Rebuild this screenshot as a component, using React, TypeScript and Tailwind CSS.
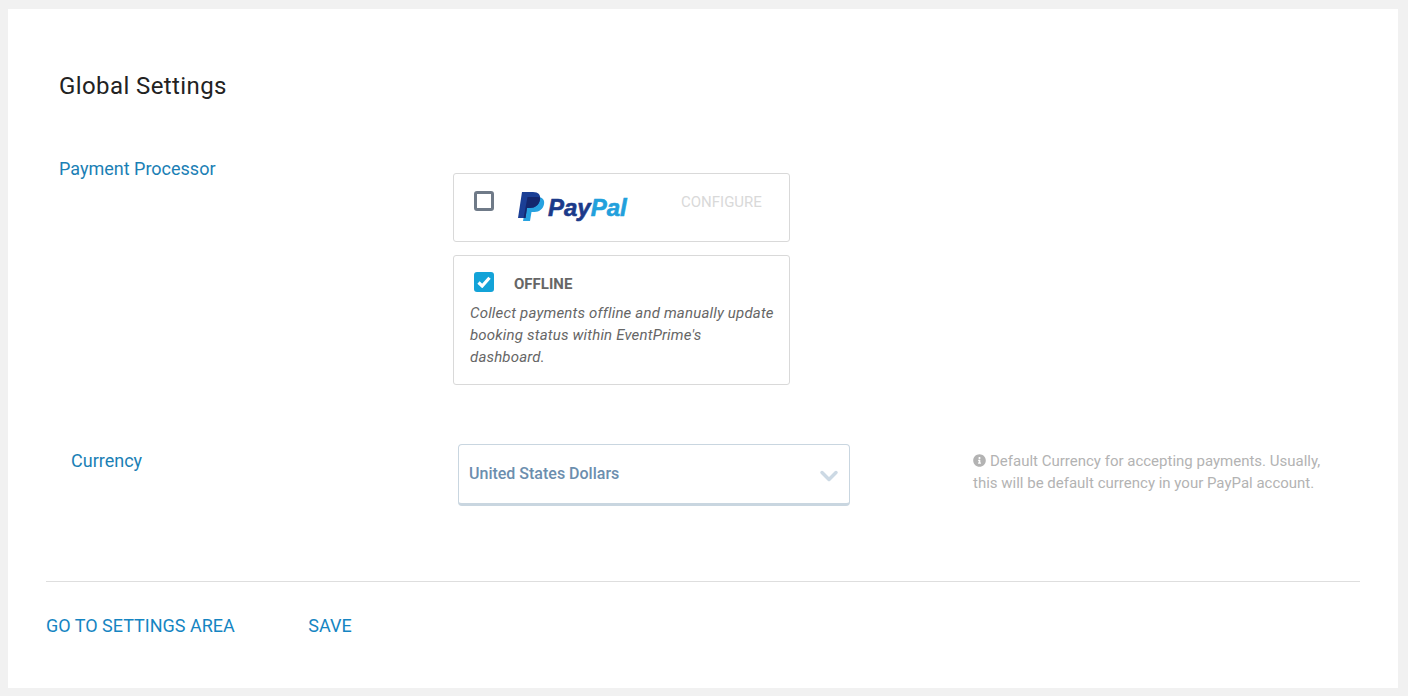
import React from 'react';
import { FaInfoCircle } from 'react-icons/fa';
import { FiChevronDown } from 'react-icons/fi';

const backP = 'M9.500 5H19c5.500 0 8 2.800 7 7.300C25 17 21.500 20 16.500 20h-3L12 29H5z';
const frontP = 'M4 0h11c5.500 0 8 3 7 7.800C21 13 17 16 12 16H9l-1.500 10H0z';

const PayPalLogo: React.FC = () => (
  <div className="flex items-start h-[30px]">
    <svg width="27" height="29" viewBox="0 0 27 29" className="block mt-[1px] shrink-0">
      <defs>
        <clipPath id="front-p">
          <path d={frontP} />
        </clipPath>
      </defs>
      <path d={backP} fill="#27a2e0" />
      <path d={frontP} fill="#1b3f96" />
      <path d={backP} fill="#14276e" clipPath="url(#front-p)" />
    </svg>
    <span className="font-['Liberation_Sans',sans-serif] italic font-bold text-[24px] leading-[24px] ml-[3px] mt-[5px] whitespace-nowrap [-webkit-text-stroke:0.6px]">
      <span className="text-[#1b3a8a]">Pay</span>
      <span className="text-[#22a0dc]">Pal</span>
    </span>
  </div>
);

const App: React.FC = () => {
  return (
    <div className="min-h-[696px] bg-[#f1f1f1] pt-[9px] pb-[8px] pl-[8px] pr-[10px] font-['Roboto',sans-serif]">
      <div className="bg-white h-[679px] pl-[38px] pr-[38px] pt-[59px]">
        <h1 className="pl-[13px] text-[24px] leading-[36px] tracking-[0.4px] text-[#222]">Global Settings</h1>

        <div className="flex mt-[51px] pl-[13px]">
          <div className="w-[394px] text-[18px] leading-[28px] text-[#1b7fb5]">Payment Processor</div>
          <div className="w-[337px] mt-[18px] flex flex-col gap-[13px]">
            <div className="h-[69px] border border-[#d9d9d9] rounded-[3px] bg-white flex items-start pl-[20px] pt-[17px]">
              <span className="w-[20px] h-[20px] rounded-[3px] border-[3px] border-[#6f7a88] bg-white shrink-0" />
              <div className="ml-[24px] w-[110px]">
                <PayPalLogo />
              </div>
              <span className="ml-[53px] text-[15px] leading-[22px] text-[#d9d9d9]">CONFIGURE</span>
            </div>

            <div className="h-[130px] border border-[#d9d9d9] rounded-[3px] bg-white pl-[16px] pr-[13px] pt-[16px]">
              <div className="flex items-start pl-[4px] h-[22px]">
                <span className="w-[20px] h-[20px] rounded-[3px] bg-[#13a3d8] flex items-center justify-center shrink-0">
                  <svg width="14" height="12" viewBox="0 0 14 12">
                    <path d="M1.500 6.500 5.200 10 12.500 1.800" fill="none" stroke="#fff" strokeWidth="3.200" />
                  </svg>
                </span>
                <span className="ml-[20px] text-[15px] leading-[22px] font-bold text-[#666] mt-[1px]">OFFLINE</span>
              </div>
              <p className="italic text-[15px] leading-[22px] tracking-[0.18px] text-[#666] mt-[8px]">
                Collect payments offline and manually update booking status within EventPrime's dashboard.
              </p>
            </div>
          </div>
        </div>

        <div className="flex mt-[59px] pl-[25px]">
          <div className="w-[387px] text-[18px] leading-[28px] text-[#1b7fb5] mt-[3px]">Currency</div>
          <div className="w-[392px] h-[62px] border border-[#c9d6e0] border-b-[3px] rounded-[4px] bg-white flex items-center justify-between pl-[10px] pr-[6px]">
            <span className="text-[16px] font-medium text-[#6c8eae] -mt-[1px]">United States Dollars</span>
            <FiChevronDown className="text-[#ccd9e4] mt-[4px]" size={28} strokeWidth={3} />
          </div>
          <p className="ml-[123px] w-[355px] mt-[6px] text-[15px] leading-[22px] text-[#b3b3b3]">
            <FaInfoCircle className="inline-block align-[-1px] mr-[4px]" size={13} />
            Default Currency for accepting payments. Usually, this will be default currency in your PayPal account.
          </p>
        </div>

        <div className="border-t border-[#dedede] mt-[75px] pt-[30px] flex gap-[73.500px] text-[18px] leading-[28px] text-[#1585c2]">
          <span>GO TO SETTINGS AREA</span>
          <span>SAVE</span>
        </div>
      </div>
    </div>
  );
};

export default App;
